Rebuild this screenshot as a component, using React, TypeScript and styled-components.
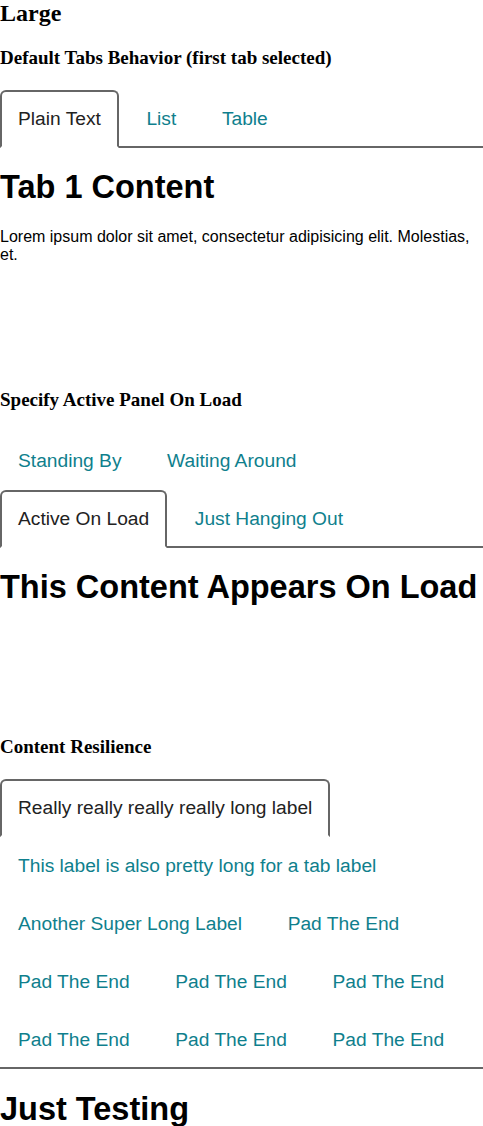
import React, { useState } from "react";
import styled, { createGlobalStyle } from "styled-components";

const GlobalStyle = createGlobalStyle`
  html, body {
    margin: 0;
    padding: 0;
    background: #ffffff;
  }
  body {
    font-family: "Liberation Serif", "Times New Roman", serif;
    color: #000000;
  }
`;

const Page = styled.main`
  width: 100%;
`;

const PageTitle = styled.h2`
  margin: 0 0 19.92px;
  font-size: 24px;
  font-weight: 700;
`;

const DemoTitle = styled.h3`
  margin: 18.72px 0;
  font-size: 19px;
  line-height: 22px;
  font-weight: 700;
`;

const TabList = styled.div`
  display: flex;
  flex-wrap: wrap;
  column-gap: 9.6px;
  row-gap: 2px;
  margin-top: 21px;
  border-bottom: 2px solid #666666;
  font-family: "Liberation Sans", Arial, sans-serif;
  font-size: 19.2px;
`;

const Tab = styled.button<{ $active: boolean }>`
  appearance: none;
  margin: 0 0 -2px;
  padding: 16px;
  border: 2px solid transparent;
  border-radius: 6px 6px 0 0;
  border-color: ${(p) => (p.$active ? "#666666 #666666 #ffffff #666666" : "transparent")};
  background: ${(p) => (p.$active ? "#ffffff" : "transparent")};
  color: ${(p) => (p.$active ? "#222222" : "#0f7f8d")};
  font: inherit;
  line-height: 22px;
  white-space: nowrap;
  cursor: pointer;
`;

const Panel = styled.div`
  display: flow-root;
  padding-bottom: 90px;
  font-family: "Liberation Sans", Arial, sans-serif;
`;

const PanelHeading = styled.h1`
  margin: 21.44px 0;
  font-size: 32.5px;
  line-height: 37px;
  font-weight: 700;
`;

const PanelText = styled.p`
  margin: 1em 0;
  font-size: 16px;
`;

type TabDef = { label: string; content: React.ReactNode };

function Tabs({ tabs, initial = 0 }: { tabs: TabDef[]; initial?: number }) {
  const [active, setActive] = useState(initial);
  return (
    <>
      <TabList role="tablist">
        {tabs.map((t, i) => (
          <Tab
            key={i}
            role="tab"
            aria-selected={i === active}
            $active={i === active}
            onClick={() => setActive(i)}
          >
            {t.label}
          </Tab>
        ))}
      </TabList>
      <Panel role="tabpanel">{tabs[active].content}</Panel>
    </>
  );
}

const defaultTabs: TabDef[] = [
  {
    label: "Plain Text",
    content: (
      <>
        <PanelHeading>Tab 1 Content</PanelHeading>
        <PanelText>
          Lorem ipsum dolor sit amet, consectetur adipisicing elit. Molestias, et.
        </PanelText>
      </>
    ),
  },
  { label: "List", content: <PanelHeading>Tab 2 Content</PanelHeading> },
  { label: "Table", content: <PanelHeading>Tab 3 Content</PanelHeading> },
];

const onLoadTabs: TabDef[] = [
  { label: "Standing By", content: <PanelHeading>Standing By</PanelHeading> },
  { label: "Waiting Around", content: <PanelHeading>Waiting Around</PanelHeading> },
  { label: "Active On Load", content: <PanelHeading>This Content Appears On Load</PanelHeading> },
  { label: "Just Hanging Out", content: <PanelHeading>Just Hanging Out</PanelHeading> },
];

const resilienceTabs: TabDef[] = [
  { label: "Really really really really long label", content: <PanelHeading>Just Testing</PanelHeading> },
  { label: "This label is also pretty long for a tab label", content: <PanelHeading>Also Testing</PanelHeading> },
  { label: "Another Super Long Label", content: <PanelHeading>Still Testing</PanelHeading> },
  ...Array.from({ length: 7 }, (_, i) => ({
    label: "Pad The End",
    content: <PanelHeading>Padding {i + 1}</PanelHeading>,
  })),
];

export default function App() {
  return (
    <Page>
      <GlobalStyle />
      <PageTitle>Large</PageTitle>

      <DemoTitle>Default Tabs Behavior (first tab selected)</DemoTitle>
      <Tabs tabs={defaultTabs} />

      <DemoTitle>Specify Active Panel On Load</DemoTitle>
      <Tabs tabs={onLoadTabs} initial={2} />

      <DemoTitle>Content Resilience</DemoTitle>
      <Tabs tabs={resilienceTabs} />
    </Page>
  );
}
